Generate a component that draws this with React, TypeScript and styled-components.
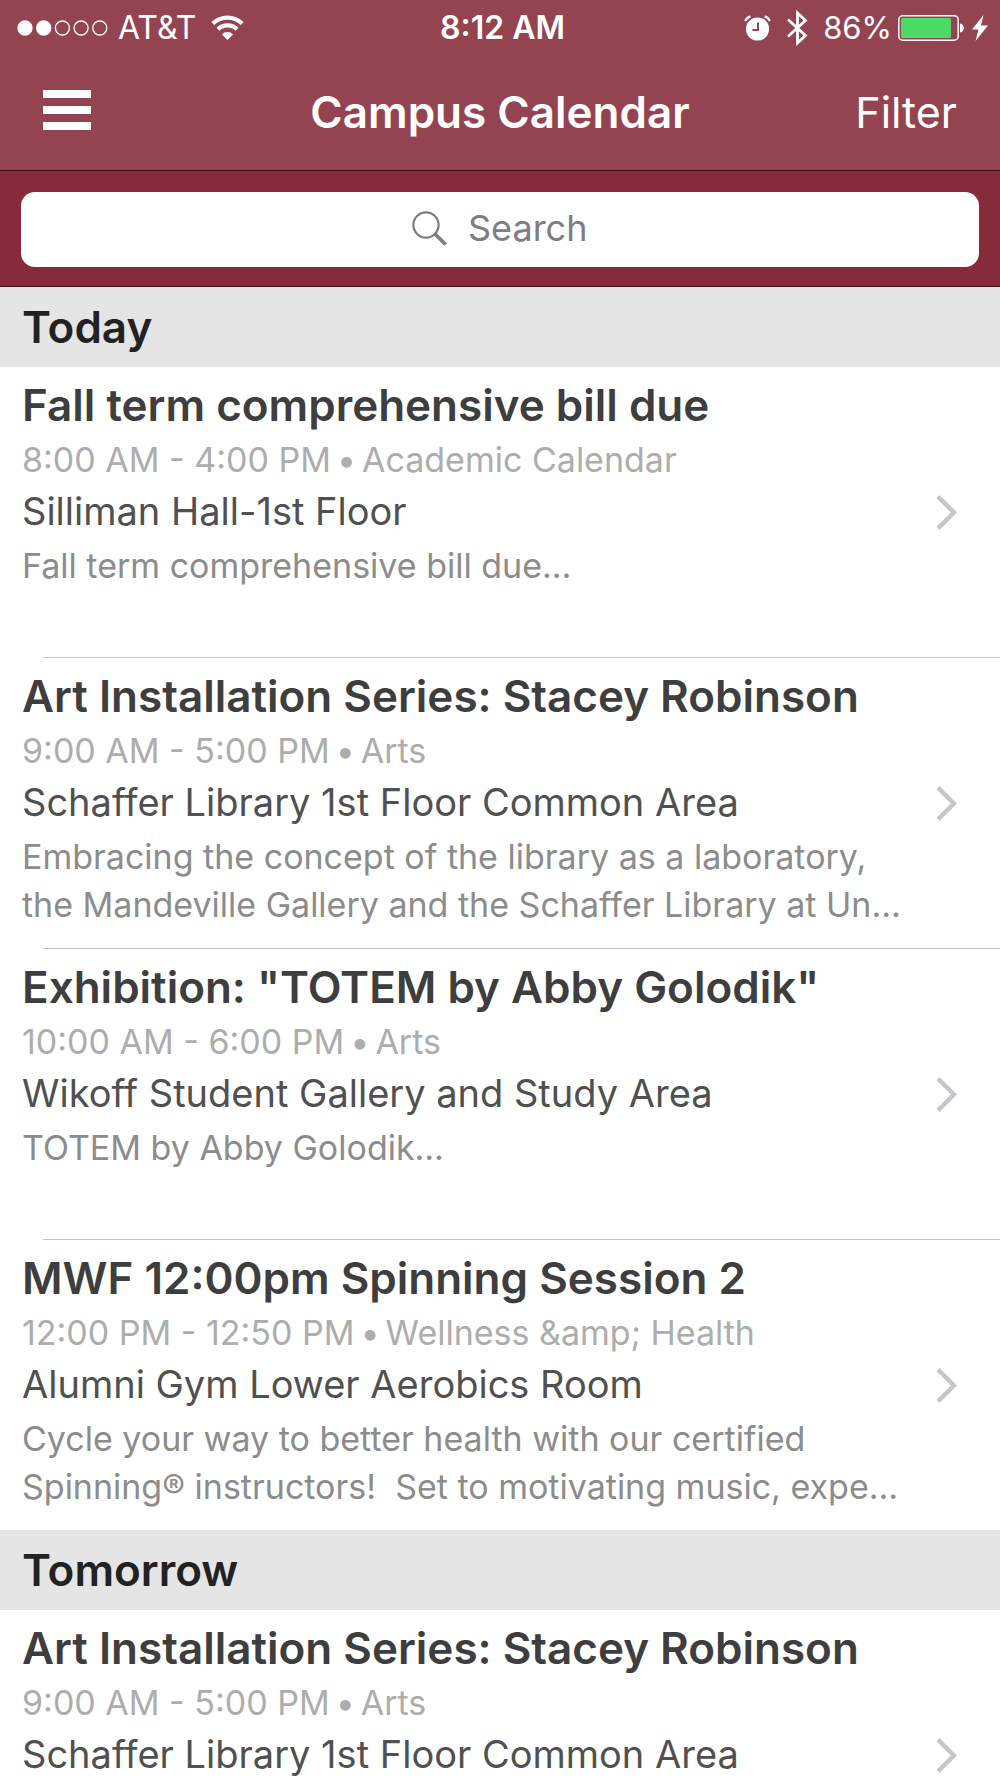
import React from "react";
import styled, { createGlobalStyle } from "styled-components";

const GlobalStyle = createGlobalStyle`
  *, *::before, *::after { box-sizing: border-box; }
  body {
    margin: 0;
    background: #fff;
    font-family: Inter, "Liberation Sans", sans-serif;
  }
  h1, h2, h3, p, ul { margin: 0; padding: 0; }
`;

const Screen = styled.div`
  display: flex;
  flex-direction: column;
  height: 100vh;
  background: #fff;
`;

const TopBar = styled.header`
  flex: none;
  background: #934450;
  border-bottom: 1px solid #3d0f18;
  color: #fff;
`;

const StatusBar = styled.div`
  display: grid;
  grid-template-columns: 1fr auto 1fr;
  align-items: center;
  height: 55px;
  padding: 0 12px 0 17px;
  font-size: 31px;
  line-height: 55px;
`;

const StatusGroup = styled.div<{ $end?: boolean }>`
  display: flex;
  align-items: center;
  justify-content: ${(p) => (p.$end ? "flex-end" : "flex-start")};
  gap: ${(p) => (p.$end ? "8px" : "10px")};
`;

const Carrier = styled.span`
  margin-right: 5px;
  font-size: 32px;
`;

const Clock = styled.time`
  font-size: 32px;
  font-weight: 600;
`;

const StatusIcons = styled.span`
  display: flex;
  align-items: center;
  gap: 16px;
  margin-right: 7px;
`;

const Power = styled.span`
  display: flex;
  align-items: center;
  gap: 6px;
`;

const NavBar = styled.nav`
  display: grid;
  grid-template-columns: 1fr auto 1fr;
  align-items: center;
  height: 115px;
  padding: 0 43px 2px;
`;

const MenuButton = styled.button`
  display: flex;
  flex-direction: column;
  justify-self: start;
  gap: 8px;
  padding: 0 0 4px;
  border: 0;
  background: none;
`;

const MenuBar = styled.span`
  width: 48px;
  height: 8px;
  background: #fff;
`;

const NavTitle = styled.h1`
  font-size: 44px;
  font-weight: 600;
  line-height: 56px;
`;

const FilterButton = styled.button`
  justify-self: end;
  padding: 0;
  border: 0;
  background: none;
  color: #fff;
  font: 400 43px/56px Inter, "Liberation Sans", sans-serif;
`;

const SearchBar = styled.form`
  flex: none;
  padding: 21px 21px 19px;
  background: #862b39;
  border-bottom: 1px solid #4a0f1b;
`;

const SearchField = styled.label`
  display: flex;
  align-items: center;
  justify-content: center;
  gap: 20px;
  height: 75px;
  padding-bottom: 2px;
  border-radius: 14px;
  background: #fff;
  color: #7d7d83;
`;

const SearchInput = styled.input`
  width: 120px;
  height: 46px;
  padding: 0 0 2px;
  border: 0;
  outline: 0;
  background: none;
  color: #7d7d83;
  font: 400 36px/44px Inter, "Liberation Sans", sans-serif;
  &::placeholder { color: #7d7d83; opacity: 1; }
`;

const Agenda = styled.main`
  flex: 1;
  min-height: 0;
  overflow-y: auto;
  scrollbar-width: none;
`;

const DayHeading = styled.h2`
  height: 80px;
  padding: 0 22px;
  background: #e5e5e5;
  color: #222;
  font-size: 44px;
  font-weight: 600;
  line-height: 80px;
`;

const EventList = styled.ul`
  list-style: none;
`;

const EventItem = styled.li`
  & + &::before {
    content: "";
    display: block;
    height: 1px;
    margin-left: 43px;
    background: #c4c4c8;
  }
`;

const EventLink = styled.a`
  display: flex;
  align-items: center;
  justify-content: space-between;
  height: 290px;
  padding: 0 43px 0 22px;
  color: inherit;
  text-decoration: none;
`;

const EventBody = styled.div`
  align-self: flex-start;
  padding-top: 10px;
  white-space: nowrap;
`;

const EventTitle = styled.h3`
  color: #3e3e3e;
  font-size: 44px;
  font-weight: 600;
  line-height: 56px;
`;

const EventMeta = styled.p`
  display: flex;
  gap: 6px;
  color: #adadad;
  font-size: 34px;
  font-weight: 400;
  line-height: 54px;
`;

const EventPlace = styled.p`
  color: #505050;
  font-size: 38px;
  font-weight: 400;
  line-height: 48px;
`;

const EventSummary = styled.p`
  padding-top: 7px;
  color: #8c8c8c;
  font-size: 34px;
  font-weight: 400;
  line-height: 48px;
  white-space: pre;
`;

const SignalIcon = () => (
  <svg width="91" height="16" viewBox="0 0 91 16" aria-hidden="true">
    {[0, 1, 2, 3, 4].map((i) => (
      <circle
        key={i}
        cx={8 + i * 18.7}
        cy="8"
        r="7"
        fill={i < 2 ? "#fff" : "none"}
        stroke="#fff"
        strokeWidth="1.3"
      />
    ))}
  </svg>
);

const WifiIcon = () => (
  <svg width="33" height="25" viewBox="0 0 33 25" aria-hidden="true">
    <g fill="none" stroke="#fff" strokeWidth="4.2">
      <path d="M1.8 8.6a21 21 0 0 1 29.4 0" />
      <path d="M7 14.2a13.6 13.6 0 0 1 19 0" />
    </g>
    <path d="M16.5 25l-5.6-5.6a8 8 0 0 1 11.2 0z" fill="#fff" />
  </svg>
);

const AlarmIcon = () => (
  <svg width="27" height="26" viewBox="0 0 27 26" aria-hidden="true">
    <circle cx="13.5" cy="14" r="11.6" fill="#fff" />
    <path d="M14 7.5V15H8.5" fill="none" stroke="#934450" strokeWidth="2" />
    <path d="M1.2 6.2A8 8 0 0 1 6.4 1.4M20.6 1.4a8 8 0 0 1 5.2 4.8" fill="none" stroke="#fff" strokeWidth="2.2" />
  </svg>
);

const BluetoothIcon = () => (
  <svg width="21" height="36" viewBox="0 0 21 36" aria-hidden="true">
    <path
      d="M1 9.5L18.5 25.5 10.5 33V3l8 7.5L1 26.5"
      fill="none"
      stroke="#fff"
      strokeWidth="2.8"
    />
  </svg>
);

const BatteryIcon = () => (
  <svg width="66" height="26" viewBox="0 0 66 26" aria-hidden="true">
    <rect x="0.8" y="0.8" width="59.4" height="24.4" rx="4" fill="none" stroke="#fff" strokeWidth="1.5" />
    <rect x="3" y="3" width="50" height="20" rx="1.5" fill="#4cd964" />
    <path d="M62 8.5c5 0 5 9 0 9z" fill="#fff" />
  </svg>
);

const BoltIcon = () => (
  <svg width="16" height="26" viewBox="0 0 16 26" aria-hidden="true">
    <path d="M11.5 0L0 14.6h6.4L3.6 26 16 10.6H9z" fill="#fff" />
  </svg>
);

const SearchIcon = () => (
  <svg width="36" height="36" viewBox="0 0 36 36" aria-hidden="true">
    <circle cx="14" cy="14" r="12.6" fill="none" stroke="currentColor" strokeWidth="2.2" />
    <path d="M22.8 22.8L33.6 33.6" stroke="currentColor" strokeWidth="3.6" />
  </svg>
);

const Chevron = () => (
  <svg width="21" height="35" viewBox="0 0 21 35" aria-hidden="true">
    <path d="M2 1.6L18 17.5 2 33.4" fill="none" stroke="#c5c5ca" strokeWidth="4.4" />
  </svg>
);

type CampusEvent = {
  title: string;
  time: string;
  category: string;
  place: string;
  summary?: string;
};

const days: { label: string; events: CampusEvent[] }[] = [
  {
    label: "Today",
    events: [
      {
        title: "Fall term comprehensive bill due",
        time: "8:00 AM - 4:00 PM",
        category: "Academic Calendar",
        place: "Silliman Hall-1st Floor",
        summary: "Fall term comprehensive bill due…",
      },
      {
        title: "Art Installation Series: Stacey Robinson",
        time: "9:00 AM - 5:00 PM",
        category: "Arts",
        place: "Schaffer Library 1st Floor Common Area",
        summary:
          "Embracing the concept of the library as a laboratory,\nthe Mandeville Gallery and the Schaffer Library at Un…",
      },
      {
        title: 'Exhibition: "TOTEM by Abby Golodik"',
        time: "10:00 AM - 6:00 PM",
        category: "Arts",
        place: "Wikoff Student Gallery and Study Area",
        summary: "TOTEM by Abby Golodik…",
      },
      {
        title: "MWF 12:00pm Spinning Session 2",
        time: "12:00 PM - 12:50 PM",
        category: "Wellness &amp; Health",
        place: "Alumni Gym Lower Aerobics Room",
        summary:
          "Cycle your way to better health with our certified\nSpinning® instructors!  Set to motivating music, expe…",
      },
    ],
  },
  {
    label: "Tomorrow",
    events: [
      {
        title: "Art Installation Series: Stacey Robinson",
        time: "9:00 AM - 5:00 PM",
        category: "Arts",
        place: "Schaffer Library 1st Floor Common Area",
      },
    ],
  },
];

export default function App() {
  return (
    <Screen>
      <GlobalStyle />
      <TopBar>
        <StatusBar>
          <StatusGroup>
            <SignalIcon />
            <Carrier>AT&amp;T</Carrier>
            <WifiIcon />
          </StatusGroup>
          <Clock>8:12 AM</Clock>
          <StatusGroup $end>
            <StatusIcons>
              <AlarmIcon />
              <BluetoothIcon />
            </StatusIcons>
            <Power>
              <span>86%</span>
              <BatteryIcon />
            </Power>
            <BoltIcon />
          </StatusGroup>
        </StatusBar>
        <NavBar>
          <MenuButton type="button" aria-label="Menu">
            <MenuBar />
            <MenuBar />
            <MenuBar />
          </MenuButton>
          <NavTitle>Campus Calendar</NavTitle>
          <FilterButton type="button">Filter</FilterButton>
        </NavBar>
      </TopBar>
      <SearchBar role="search">
        <SearchField>
          <SearchIcon />
          <SearchInput type="text" placeholder="Search" aria-label="Search" />
        </SearchField>
      </SearchBar>
      <Agenda>
        {days.map((day) => (
          <section key={day.label}>
            <DayHeading>{day.label}</DayHeading>
            <EventList>
              {day.events.map((event) => (
                <EventItem key={event.title}>
                  <EventLink href="#">
                    <EventBody>
                      <EventTitle>{event.title}</EventTitle>
                      <EventMeta>
                        <span>{event.time}</span>
                        <span>•</span>
                        <span>{event.category}</span>
                      </EventMeta>
                      <EventPlace>{event.place}</EventPlace>
                      {event.summary && <EventSummary>{event.summary}</EventSummary>}
                    </EventBody>
                    <Chevron />
                  </EventLink>
                </EventItem>
              ))}
            </EventList>
          </section>
        ))}
      </Agenda>
    </Screen>
  );
}
